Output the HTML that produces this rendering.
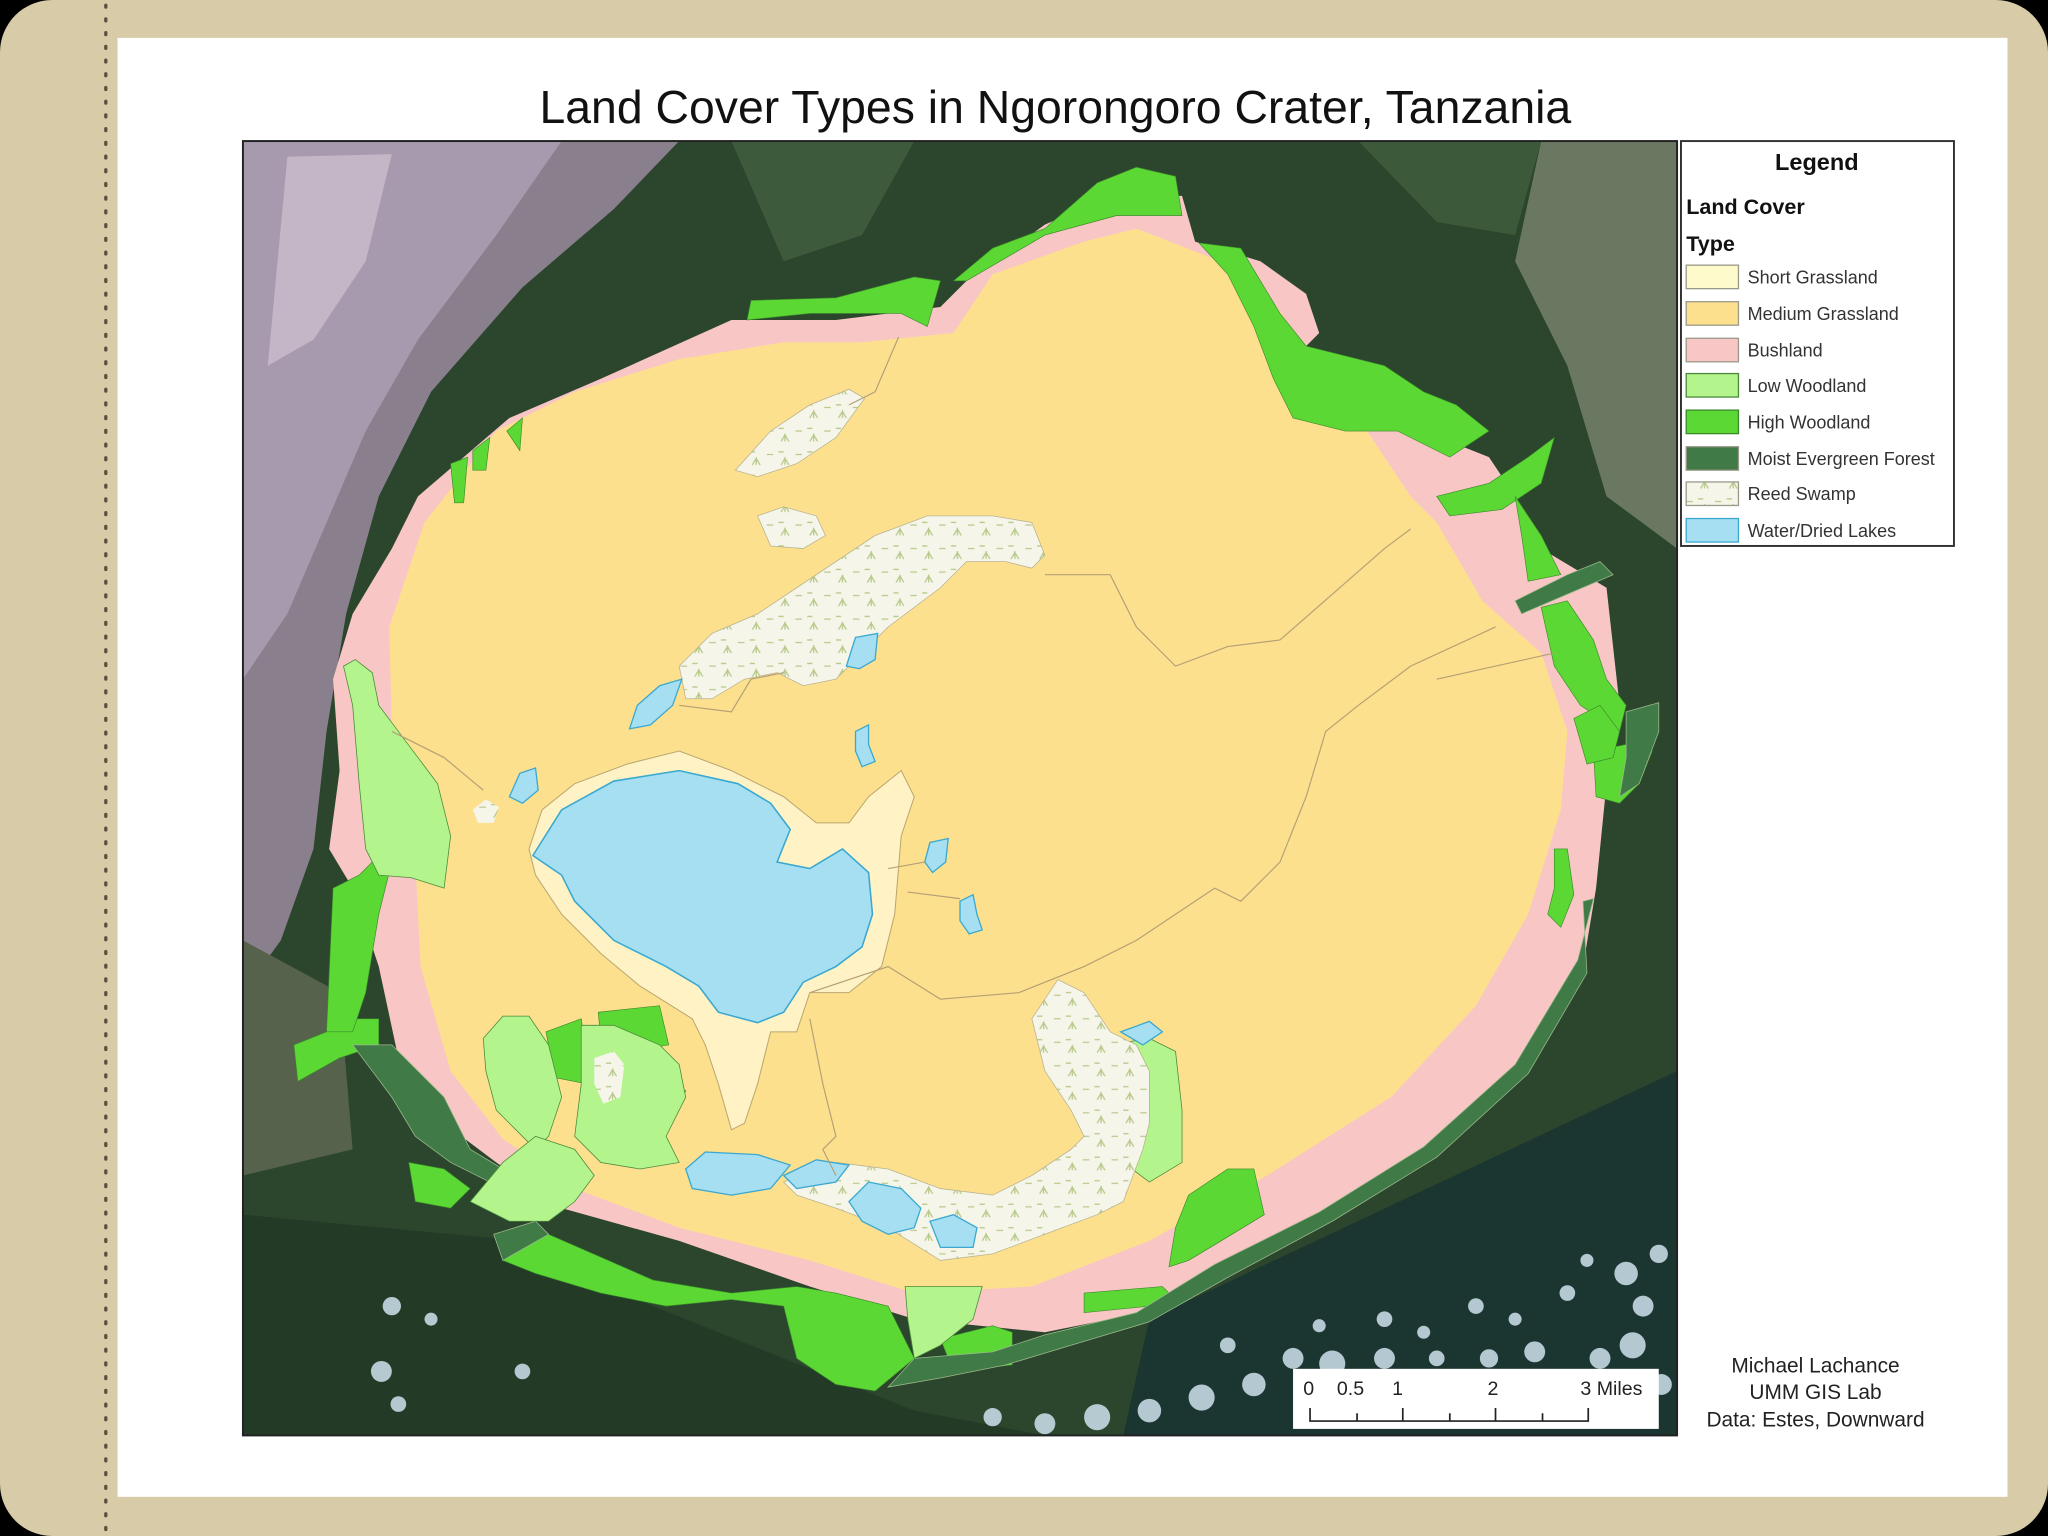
<!DOCTYPE html>
<html><head><meta charset="utf-8"><style>
html,body{margin:0;padding:0;background:#000;}
svg{display:block}
text{font-family:"Liberation Sans",Arial,sans-serif}
</style></head><body>
<svg width="2048" height="1536" viewBox="0 0 1568 1176" xmlns="http://www.w3.org/2000/svg">
<defs>
<clipPath id="mc"><rect x="186" y="108" width="1098" height="991"/></clipPath>
<pattern id="reed" width="22" height="18" patternUnits="userSpaceOnUse">
<rect width="22" height="18" fill="#f6f5ea"/>
<path d="M4 14 l3 -5 M7 14 l0 -6 M10 14 l-3 -5 M15 6 h5 M2 4 h4" stroke="#b8c98a" stroke-width="1" fill="none"/>
</pattern>
</defs>
<rect x="0" y="0" width="1568" height="1176" rx="40" fill="#d8cba7"/>
<line x1="81" y1="4" x2="81" y2="1176" stroke="#5a5040" stroke-width="2.5" stroke-dasharray="1.5 9" stroke-linecap="round"/>
<rect x="90" y="29" width="1447" height="1117" fill="#fff"/>
<text x="808" y="94" font-size="35.5" text-anchor="middle" fill="#111">Land Cover Types in Ngorongoro Crater, Tanzania</text>

<g clip-path="url(#mc)">
<rect x="186" y="108" width="1098" height="991" fill="#2c452d"/>
<polygon points="186,108 520,108 470,160 400,220 330,300 290,380 265,470 250,560 240,650 215,720 186,760" fill="#8a7f8c"/>
<polygon points="186,108 430,108 380,180 320,260 280,330 250,400 220,470 186,520" fill="#a89aae"/>
<polygon points="220,120 300,118 280,200 240,260 205,280" fill="#c4b6c6"/>
<polygon points="186,720 260,760 270,880 186,900" fill="#56624c"/>
<polygon points="1180,108 1284,108 1284,420 1230,380 1200,280 1160,200" fill="#6a7862"/>
<polygon points="1040,108 1180,108 1160,180 1100,170" fill="#3c5a3a"/>
<polygon points="560,108 700,108 660,180 600,200" fill="#3e5a3c"/>
<polygon points="186,930 400,950 500,1000 700,1080 800,1099 186,1099" fill="#233a26"/>
<polygon points="880,1010 1284,820 1284,1099 860,1099" fill="#1b3530"/>
<g fill="#cfe2ee" opacity="0.85">
<circle cx="1060" cy="1010" r="6"/><circle cx="1090" cy="1020" r="5"/><circle cx="1130" cy="1000" r="6"/>
<circle cx="1160" cy="1010" r="5"/><circle cx="1200" cy="990" r="6"/><circle cx="1245" cy="975" r="9"/>
<circle cx="1258" cy="1000" r="8"/><circle cx="1250" cy="1030" r="10"/><circle cx="1225" cy="1040" r="8"/>
<circle cx="1175" cy="1035" r="8"/><circle cx="1140" cy="1040" r="7"/><circle cx="1100" cy="1040" r="6"/>
<circle cx="1060" cy="1040" r="8"/><circle cx="1020" cy="1044" r="10"/><circle cx="990" cy="1040" r="8"/>
<circle cx="960" cy="1060" r="9"/><circle cx="920" cy="1070" r="10"/><circle cx="880" cy="1080" r="9"/>
<circle cx="840" cy="1085" r="10"/><circle cx="800" cy="1090" r="8"/><circle cx="760" cy="1085" r="7"/>
<circle cx="940" cy="1030" r="6"/><circle cx="1010" cy="1015" r="5"/><circle cx="1270" cy="960" r="7"/>
<circle cx="1215" cy="965" r="5"/><circle cx="1272" cy="1060" r="8"/>
<circle cx="300" cy="1000" r="7"/><circle cx="292" cy="1050" r="8"/><circle cx="305" cy="1075" r="6"/>
<circle cx="400" cy="1050" r="6"/><circle cx="330" cy="1010" r="5"/>
</g>
</g>

<!-- bushland ring -->
<polygon fill="#f8c6c4" points="740,215 800,172 850,150 905,150 915,185 965,200 1000,225 1010,255 1000,265 1070,300 1115,340 1140,350 1160,380 1180,420 1230,450 1240,540 1230,600 1222,680 1212,740 1165,815 1095,878 1015,928 935,968 875,1005 800,1020 700,1010 620,985 520,950 430,925 380,890 340,860 305,810 290,740 270,680 252,650 260,590 255,520 270,470 300,420 320,380 390,320 460,290 560,245 640,245 720,235"/>
<!-- medium grassland -->
<polygon fill="#fde08e" points="730,255 760,210 830,185 870,175 960,210 995,260 1040,320 1080,380 1100,400 1135,460 1180,500 1200,560 1195,620 1170,700 1130,770 1065,840 970,900 880,950 790,985 700,990 620,965 520,940 440,910 385,872 345,820 322,740 318,660 300,560 298,480 325,400 380,330 440,300 520,275 600,262 660,262"/>
<!-- high woodland patches -->
<g fill="#5cd835" stroke="#3a8a2a" stroke-width="0.5">
<polygon points="575,230 640,228 700,212 720,215 710,250 690,240 620,240 572,245"/>
<polygon points="730,215 760,190 800,175 840,140 870,128 900,135 905,165 855,165 800,180 740,215"/>
<polygon points="918,186 950,190 980,240 1000,265 1060,280 1090,300 1115,310 1140,330 1110,350 1070,330 1030,330 990,320 975,290 960,250 940,210"/>
<polygon points="1100,380 1140,370 1170,350 1190,335 1180,370 1150,390 1110,395"/>
<polygon points="1160,380 1180,410 1195,440 1170,445 1165,410"/>
<polygon points="1180,465 1200,460 1220,490 1230,520 1245,540 1240,560 1210,540 1190,510"/>
<polygon points="1220,575 1245,570 1265,575 1255,600 1240,615 1222,610"/>
<polygon points="1190,650 1200,650 1205,685 1195,710 1185,700 1190,680"/>
<polygon points="1205,550 1225,540 1240,560 1235,580 1215,585"/>
<polygon points="225,800 250,790 270,780 290,780 290,800 260,810 228,828"/>
<polygon points="255,680 275,670 285,660 300,660 290,700 280,760 270,790 250,790"/>
<polygon points="345,355 358,350 355,385 348,385"/>
<polygon points="362,345 375,335 372,360 362,360"/>
<polygon points="388,330 400,320 398,345"/>
<polygon points="313,890 340,895 360,910 345,925 318,920"/>
<polygon points="385,945 420,945 500,980 560,990 610,985 640,990 680,1000 700,1040 670,1065 640,1060 610,1040 600,1000 560,995 510,1000 460,990 410,975 385,965"/>
<polygon points="720,1025 760,1015 775,1020 775,1045 730,1050"/>
<polygon points="830,990 890,985 900,995 880,1000 830,1005"/>
<polygon points="910,915 940,895 960,895 968,930 935,950 910,965 895,970 900,940"/>
<polygon points="418,790 445,780 448,800 450,830 425,825"/>
<polygon points="458,775 505,770 512,800 480,805 460,795"/>
<polygon points="455,835 490,825 525,835 515,860 490,872 458,865"/>
</g>
<!-- moist evergreen -->
<g fill="#3f7a47" stroke="#9ab88a" stroke-width="0.6">
<polygon points="270,800 300,800 340,840 360,880 385,895 375,905 345,890 318,870 300,840"/>
<polygon points="1160,460 1200,440 1225,430 1235,440 1200,455 1165,470"/>
<polygon points="1245,545 1270,538 1270,560 1255,600 1240,610 1245,580"/>
<polygon points="1212,690 1220,688 1208,735 1160,815 1090,878 1010,928 930,968 870,1005 800,1022 760,1035 700,1040 680,1062 720,1055 770,1045 820,1030 880,1012 940,978 1020,935 1100,886 1170,822 1215,745"/>
<polygon points="378,945 410,935 420,945 385,965"/>
</g>
<!-- low woodland -->
<g fill="#b4f48c" stroke="#4a8a3a" stroke-width="0.6">
<polygon points="263,510 272,505 285,515 290,540 305,560 320,580 335,600 345,640 340,680 315,672 290,670 280,650 275,600 270,540"/>
<polygon points="370,795 385,778 405,778 420,800 430,840 420,870 410,880 400,870 380,850 372,820"/>
<polygon points="385,890 410,870 440,880 455,900 440,920 420,935 390,935 360,920"/>
<polygon points="445,785 470,785 505,800 520,815 525,840 510,870 520,890 490,895 460,890 440,870 445,830"/>
<polygon points="850,800 880,795 900,805 905,850 905,890 880,905 860,890 855,850"/>
<polygon points="693,985 752,985 745,1010 720,1030 700,1040 695,1010"/>
</g>
<!-- short grassland around lake -->
<polygon fill="#fff3c5" stroke="#bba870" stroke-width="0.8" points="405,650 415,620 440,600 480,585 520,575 560,590 600,610 625,630 650,630 665,610 690,590 700,610 690,640 685,700 675,740 650,760 620,760 610,790 590,790 580,830 570,860 560,865 550,830 540,800 530,780 490,755 460,730 430,700 410,670"/>
<!-- lake -->
<polygon fill="#a6dff2" stroke="#3aa8d0" stroke-width="1.2" points="408,655 430,620 470,598 520,590 565,600 590,615 605,635 595,660 620,665 645,650 665,668 668,700 660,725 640,740 615,752 600,775 580,783 550,775 535,755 510,740 490,730 470,720 455,705 440,690 430,670"/>
<!-- reed swamps -->
<g fill="url(#reed)" stroke="#b9b490" stroke-width="0.6">
<polygon points="563,360 590,330 620,310 650,298 662,305 640,335 610,355 580,365"/>
<polygon points="580,395 600,388 625,395 632,410 615,420 590,418"/>
<polygon points="520,510 545,485 580,470 610,450 640,430 670,410 710,395 760,395 790,400 800,425 790,435 770,430 740,430 720,450 700,465 680,480 660,500 640,520 615,525 595,515 570,520 545,535 525,535"/>
<polygon points="600,905 640,890 680,895 720,910 760,915 790,900 820,880 830,870 820,850 800,820 790,780 810,750 830,760 850,790 870,800 880,820 880,860 875,880 860,920 840,930 800,945 760,960 720,965 680,940 640,925 610,915"/>
</g>
<!-- small lakes -->
<g fill="#a6dff2" stroke="#3aa8d0" stroke-width="1">
<polygon points="482,558 488,540 505,525 522,520 515,540 498,555"/>
<polygon points="648,510 655,488 672,485 670,505 658,512"/>
<polygon points="655,560 665,555 665,570 670,583 660,587 655,575"/>
<polygon points="390,610 398,592 410,588 412,605 400,615"/>
<polygon points="708,660 712,645 726,642 724,660 714,668"/>
<polygon points="735,690 745,685 748,700 752,712 742,715 735,705"/>
<polygon points="525,895 540,882 580,884 605,892 590,910 560,915 530,910"/>
<polygon points="600,900 625,888 650,892 640,905 610,910"/>
<polygon points="650,920 665,905 690,910 705,925 700,940 680,945 660,935"/>
<polygon points="712,935 730,930 748,940 745,955 720,955"/>
<polygon points="858,790 880,782 890,790 875,800"/>
</g>
<polygon fill="url(#reed)" points="362,620 372,612 382,618 378,630 366,630"/>
<polygon fill="url(#reed)" points="455,810 470,805 478,815 475,840 462,845 455,830"/>
<!-- internal lines -->
<g fill="none" stroke="#b4a074" stroke-width="0.9">
<path d="M688 258 L670 300 L650 310"/>
<path d="M800 440 L850 440 L870 480 L900 510 L940 495 L980 490 L1060 420 L1080 405"/>
<path d="M520 540 L560 545 L575 520 L600 515"/>
<path d="M1145 480 L1080 510 L1040 540 L1015 560 L1000 610 L980 660 L950 690 L930 680 L900 700 L870 720 L830 740 L780 760 L720 765 L680 740 L620 760"/>
<path d="M1190 500 L1100 520"/>
<path d="M620 780 L630 830 L640 870 L630 880 L640 900"/>
<path d="M300 560 L340 580 L370 605"/>
<path d="M695 683 L735 688"/>
<path d="M680 665 L708 660"/>
</g>
<rect x="186" y="108" width="1098" height="991" fill="none" stroke="#222" stroke-width="1.5"/>

<!-- scale bar -->
<rect x="990" y="1048" width="280" height="46" fill="#fff"/>
<g font-size="15" fill="#222">
<text x="1002" y="1068" text-anchor="middle">0</text>
<text x="1034" y="1068" text-anchor="middle">0.5</text>
<text x="1070" y="1068" text-anchor="middle">1</text>
<text x="1143" y="1068" text-anchor="middle">2</text>
<text x="1210" y="1068">3 Miles</text>
</g>
<g stroke="#222" stroke-width="1.3" fill="none">
<path d="M1003 1078 V1088 H1216 V1078"/>
<path d="M1039 1082 V1088 M1074 1078 V1088 M1110 1082 V1088 M1145 1078 V1088 M1181 1082 V1088"/>
</g>

<!-- legend -->
<rect x="1287" y="108" width="209" height="310" fill="#fff" stroke="#333" stroke-width="1.5"/>
<text x="1391" y="130" font-size="18" font-weight="bold" text-anchor="middle" fill="#111">Legend</text>
<text x="1291" y="164" font-size="16.5" font-weight="bold" fill="#111">Land Cover</text>
<text x="1291" y="192" font-size="16.5" font-weight="bold" fill="#111">Type</text>
<g stroke="#9a9a88" stroke-width="1">
<rect x="1291" y="203" width="40" height="18" fill="#fffacb"/>
<rect x="1291" y="231" width="40" height="18" fill="#fde08e"/>
<rect x="1291" y="259" width="40" height="18" fill="#f8c6c4"/>
<rect x="1291" y="286" width="40" height="18" fill="#b4f48c" stroke="#4a8a3a"/>
<rect x="1291" y="314" width="40" height="18" fill="#5cd835" stroke="#3a8a2a"/>
<rect x="1291" y="342" width="40" height="18" fill="#3f7a47"/>
<rect x="1291" y="369" width="40" height="18" fill="url(#reed)"/>
<rect x="1291" y="397" width="40" height="18" fill="#a6dff2" stroke="#3aa8d0"/>
</g>
<g font-size="13.8" fill="#333">
<text x="1338" y="217">Short Grassland</text>
<text x="1338" y="245">Medium Grassland</text>
<text x="1338" y="273">Bushland</text>
<text x="1338" y="300">Low Woodland</text>
<text x="1338" y="328">High Woodland</text>
<text x="1338" y="356">Moist Evergreen Forest</text>
<text x="1338" y="383">Reed Swamp</text>
<text x="1338" y="411">Water/Dried Lakes</text>
</g>
<g font-size="16" fill="#222" text-anchor="middle">
<text x="1390" y="1051">Michael Lachance</text>
<text x="1390" y="1071">UMM GIS Lab</text>
<text x="1390" y="1092">Data: Estes, Downward</text>
</g>
</svg>
</body></html>
